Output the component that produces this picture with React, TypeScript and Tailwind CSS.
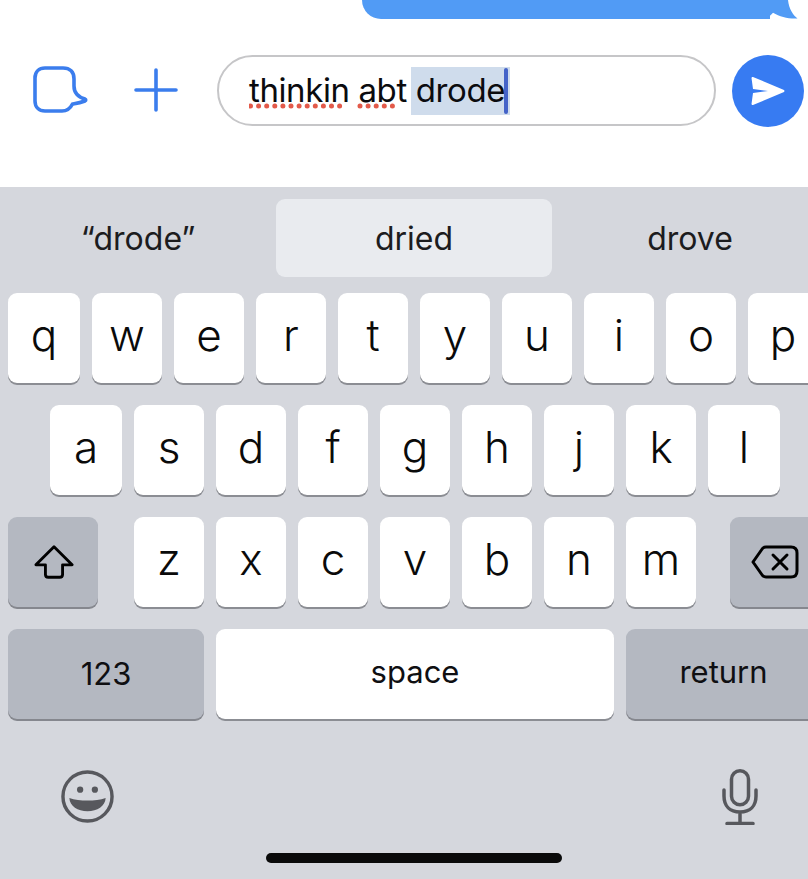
const font = "font-['Inter','Liberation_Sans',sans-serif]";

const Key = ({ label, className = "w-[70px]" }: { label: string; className?: string }) => (
  <div className={`flex h-[90px] shrink-0 items-center justify-center rounded-[9px] bg-white pb-[6px] text-[44px] font-light leading-none text-[#0a0a0a] shadow-[0_2px_0_#8b8d93] ${className}`}>
    {label}
  </div>
);

const GrayKey = ({ className, children }: { className: string; children: React.ReactNode }) => (
  <div className={`flex h-[90px] shrink-0 items-center justify-center rounded-[9px] bg-[#b4b8c1] shadow-[0_2px_0_#85878e] ${className}`}>
    {children}
  </div>
);

export default function App() {
  return (
    <div className={`flex h-[879px] w-[808px] flex-col overflow-hidden bg-white ${font}`}>
      {/* message bubble cut off by the top edge */}
      <div className="flex h-[55px] justify-end">
        <div className="relative mr-[38px] h-[19px] w-[408px] rounded-bl-[26px] bg-[#519bf5]">
          <svg className="absolute -right-[32px] top-0" width="50" height="19" viewBox="0 0 50 19">
            <path d="M0 0 H36 C37 9 41 15 45.500 18.500 C36 19 28 16.500 21 12.700 C18 16.500 14 19 8 19 H0 Z" fill="#519bf5" />
          </svg>
        </div>
      </div>

      <div className="flex h-[132px] items-start">
        <svg className="ml-[33px] mt-[11px] shrink-0" width="56" height="48" viewBox="0 0 56 48" fill="none">
          <path
            d="M12 2 H30 C37 2 41 6 41 13 V20 C41 27 45 31 52 33 C53 33.500 53 34.500 52 35 C47 37 43 37.500 39.500 38 C37.500 42 35 45 29 45 H12 C6 45 2 41 2 35 V12 C2 6 6 2 12 2 Z"
            stroke="#3b7ded"
            strokeWidth="3.600"
            strokeLinejoin="round"
          />
        </svg>
        <svg className="ml-[45px] mt-[13px] shrink-0" width="44" height="44" viewBox="0 0 44 44" fill="none">
          <path d="M22 2 V42 M2 22 H42" stroke="#3b7ded" strokeWidth="3.600" strokeLinecap="round" />
        </svg>
        <div className="ml-[39px] flex h-[71px] w-[499px] shrink-0 items-center rounded-full border-2 border-[#c6c6c8] pl-[30px] text-[33px] tracking-[-0.4px] text-[#0b0b0f]">
          <span className="relative whitespace-pre pt-[1px]">
            thinkin abt
            <svg className="absolute left-0 top-[38px]" width="160" height="6" viewBox="0 0 160 6">
              <line x1="1.500" y1="3" x2="98.700" y2="3" stroke="#e35a4a" strokeWidth="5" strokeLinecap="round" strokeDasharray="0 8.100" />
              <line x1="111" y1="3" x2="149" y2="3" stroke="#e35a4a" strokeWidth="5" strokeLinecap="round" strokeDasharray="0 8.100" />
            </svg>
          </span>
          <span className="relative ml-[4px] flex h-[48px] items-center bg-[#cfdcec] pl-[5px] pr-[2px]">
            <span className="pt-[1px]">drode</span>
            <span className="ml-[-1px] h-[46px] w-[4px] rounded-full bg-[#4463c8]" />
          </span>
        </div>
        <div className="ml-[16px] flex h-[72px] w-[72px] shrink-0 items-center justify-center rounded-full bg-[#377bf2]">
          <svg width="36" height="30" viewBox="0 0 34 30">
            <path d="M2 1 L33 14 C33.600 14.500 33.600 15.500 33 16 L2 29 C1 29 0.500 28.500 0.500 28 L2 17 L17 15 L2 13 L0.500 2 C0.500 1.500 1 1 2 1 Z" fill="#fff" />
          </svg>
        </div>
      </div>

      <div className="flex flex-1 flex-col bg-[#d5d7dd]">
        {/* suggestions */}
        <div className="mt-[12px] flex h-[78px] items-center text-[32px] text-[#1c1c1e]">
          <div className="w-[276px] shrink-0 pt-[1px] text-center">“drode”</div>
          <div className="flex h-[78px] w-[276px] shrink-0 items-center justify-center rounded-[9px] bg-[#e9ebef] pt-[1px]">dried</div>
          <div className="w-[276px] shrink-0 pt-[1px] text-center">drove</div>
        </div>

        <div className="mt-[16px] flex gap-[12px] pl-[8px]">
          <Key label="q" className="w-[72px]" />
          {["w", "e", "r", "t", "y", "u", "i", "o", "p"].map((k) => (
            <Key key={k} label={k} />
          ))}
        </div>
        <div className="mt-[22px] flex gap-[12px] pl-[50px]">
          <Key label="a" className="w-[72px]" />
          {["s", "d", "f", "g", "h", "j", "k"].map((k) => (
            <Key key={k} label={k} />
          ))}
          <Key label="l" className="w-[72px]" />
        </div>
        <div className="mt-[22px] flex pl-[8px]">
          <GrayKey className="w-[90px]">
            <svg className="ml-[2px]" width="40" height="36" viewBox="0 0 42 36" fill="none">
              <path
                d="M21 2 L40 21 H30 V31 C30 33 29 34 27 34 H15 C13 34 12 33 12 31 V21 H2 Z"
                stroke="#000"
                strokeWidth="3"
                strokeLinejoin="round"
              />
            </svg>
          </GrayKey>
          <div className="ml-[36px] flex gap-[12px]">
            {["z", "x", "c", "v", "b", "n", "m"].map((k) => (
              <Key key={k} label={k} />
            ))}
          </div>
          <GrayKey className="ml-[34px] w-[90px]">
            <svg width="48" height="34" viewBox="0 0 48 34" fill="none">
              <path
                d="M15 2 H40 C44 2 46 4 46 8 V26 C46 30 44 32 40 32 H15 C13.500 32 12.500 31.500 11.500 30.500 L2 17 L11.500 3.500 C12.500 2.500 13.500 2 15 2 Z"
                stroke="#000"
                strokeWidth="3"
                strokeLinejoin="round"
              />
              <path d="M22 10 L36 24 M36 10 L22 24" stroke="#000" strokeWidth="3" strokeLinecap="round" />
            </svg>
          </GrayKey>
        </div>
        <div className="mt-[22px] flex gap-[12px] pl-[8px] text-[31px] text-[#0f0f12]">
          <GrayKey className="w-[196px]">123</GrayKey>
          <div className="flex h-[90px] w-[398px] shrink-0 items-center justify-center rounded-[9px] bg-white pb-[3px] shadow-[0_2px_0_#8b8d93]">space</div>
          <GrayKey className="w-[190px] pb-[3px]">
            <span className="ml-[5px]">return</span>
          </GrayKey>
        </div>

        <div className="mt-[50px] flex items-start justify-between pl-[60px] pr-[50px]">
          <svg width="55" height="55" viewBox="0 0 56 56" fill="none">
            <circle cx="28" cy="28" r="25" stroke="#57585d" strokeWidth="3.500" />
            <circle cx="20.500" cy="21" r="3.200" fill="#57585d" />
            <circle cx="35.500" cy="21" r="3.200" fill="#57585d" />
            <path d="M9.500 29.500 C20 33 36 33 46.500 29.500 C46 38 38 43 28 43 C18 43 10 38 9.500 29.500 Z" fill="#57585d" />
          </svg>
          <svg width="36" height="56" viewBox="0 0 36 56" fill="none" stroke="#57585d" strokeWidth="3.500">
            <rect x="9.500" y="1.800" width="17" height="34" rx="8.500" />
            <path d="M2 21 V27 C2 37 8 43 18 43 C28 43 34 37 34 27 V21 M18 43 V54 M5 54.500 H31" strokeLinecap="round" />
          </svg>
        </div>

        <div className="mb-[16px] ml-[266px] mt-auto h-[10px] w-[296px] rounded-full bg-[#0a0a0a]" />
      </div>
    </div>
  );
}
